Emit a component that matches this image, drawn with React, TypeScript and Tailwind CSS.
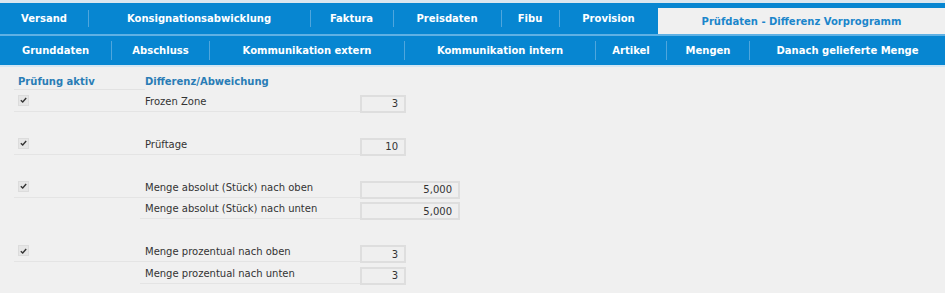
const topTabs = [
  { label: "Versand", w: "w-[88px]" },
  { label: "Konsignationsabwicklung", w: "w-[222px]" },
  { label: "Faktura", w: "w-[83px]" },
  { label: "Preisdaten", w: "w-[108px]" },
  { label: "Fibu", w: "w-[58px]" },
  { label: "Provision", w: "w-[99px]" },
];

const subTabs = [
  { label: "Grunddaten", w: "w-[111px]" },
  { label: "Abschluss", w: "w-[98px]" },
  { label: "Kommunikation extern", w: "w-[195px]" },
  { label: "Kommunikation intern", w: "w-[191px]" },
  { label: "Artikel", w: "w-[71px]" },
  { label: "Mengen", w: "w-[83px]" },
  { label: "Danach gelieferte Menge", w: "flex-1" },
];

type Row =
  | { kind: "gap" }
  | { kind: "row"; check: boolean; label: string; value: string; wide?: boolean };

const rows: Row[] = [
  { kind: "row", check: true, label: "Frozen Zone", value: "3" },
  { kind: "gap" },
  { kind: "row", check: true, label: "Prüftage", value: "10" },
  { kind: "gap" },
  { kind: "row", check: true, label: "Menge absolut (Stück) nach oben", value: "5,000", wide: true },
  { kind: "row", check: false, label: "Menge absolut (Stück) nach unten", value: "5,000", wide: true },
  { kind: "gap" },
  { kind: "row", check: true, label: "Menge prozentual nach oben", value: "3" },
  { kind: "row", check: false, label: "Menge prozentual nach unten", value: "3" },
];

const Sep = ({ h }: { h: string }) => <div className={`w-px ${h} bg-[#4fa6dd] shrink-0`} />;

const Check = () => (
  <div className="w-[11px] h-[11px] bg-[#e6e6e6] border border-[#dcdcdc] flex items-center justify-center">
    <svg width="7" height="6" viewBox="0 0 7 6">
      <path d="M0.8 3.2 L2.7 4.9 L6.2 1" fill="none" stroke="#333" strokeWidth="1.4" />
    </svg>
  </div>
);

export default function App() {
  return (
    <div className="w-[945px] h-[293px] bg-[#f0f0f0] font-['DejaVu_Sans',Verdana,sans-serif] overflow-hidden">
      {/* tab bars */}
      <div className="h-[3px] bg-[#dbe7ef]" />
      <div className="h-[31px] bg-[#0786d1] flex items-end">
        {topTabs.map((t, i) => (
          <div key={t.label} className="flex items-center h-[31px]">
            {i > 0 && <Sep h="h-[17px]" />}
            <div className={`${t.w} ${i > 0 ? "-ml-px" : ""} h-full flex items-center justify-center text-white font-bold text-[10px]`}>
              {t.label}
            </div>
          </div>
        ))}
        <div className="flex-1 h-[26px] bg-[#f0f0f0] flex items-center justify-center text-[#1b86cb] font-bold text-[10px] pt-px">
          Prüfdaten - Differenz Vorprogramm
        </div>
      </div>
      <div className="h-[2px] bg-[#5fb1e4]" />
      <div className="h-[29px] bg-[#0786d1] flex">
        {subTabs.map((t, i) => (
          <div key={t.label} className={`${t.w} flex items-center`}>
            {i > 0 && <Sep h="h-[19px]" />}
            <div className="flex-1 h-full flex items-center justify-center text-white font-bold text-[10px]">{t.label}</div>
          </div>
        ))}
      </div>
      <div className="h-[2px] bg-[#d3e6f3]" />

      {/* content */}
      <div className="pl-[14px] pt-[7px]">
        <div className="flex h-[16px] items-center">
          <div className="w-[131px] pl-[4px] text-[10px] font-bold text-[#2a7db6] border-b border-[#e2e2e2] h-full">Prüfung aktiv</div>
          <div className="text-[10px] font-bold text-[#2a7db6] h-full">Differenz/Abweichung</div>
        </div>
        {rows.map((r, i) =>
          r.kind === "gap" ? (
            <div key={i} className="h-[21.5px]" />
          ) : (
            <div key={i} className="flex h-[21.5px] items-end">
              <div className={`flex items-center h-full border-b border-[#e4e4e4] ${r.check ? "w-[346px]" : "ml-[126px] w-[220px]"}`}>
                {r.check && (
                  <div className="w-[126px] pl-[4px] flex items-center">
                    <Check />
                  </div>
                )}
                <div className="pl-[5px] pt-[2px] text-[10px] text-[#333]">{r.label}</div>
              </div>
              <div
                className={`${r.wide ? "w-[100px]" : "w-[46px]"} h-[18px] -mb-[1px] border-2 border-[#dedede] bg-[#efefef] flex items-center justify-end pr-[6px] text-[10px] text-[#333]`}
              >
                {r.value}
              </div>
            </div>
          )
        )}
      </div>
    </div>
  );
}
